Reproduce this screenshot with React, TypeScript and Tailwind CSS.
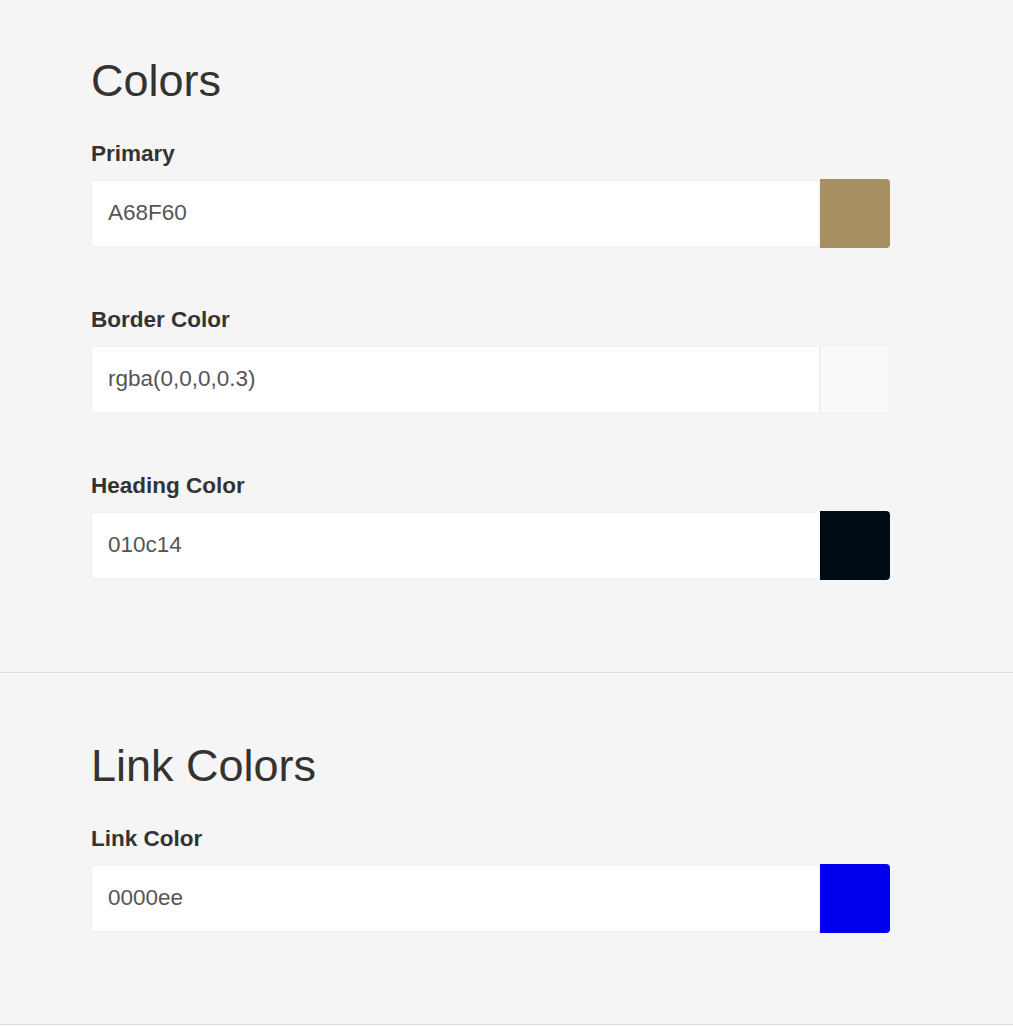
const font = { fontFamily: '"Liberation Sans", Arial, sans-serif' };

type Field = { label: string; value: string; swatch: string };

const colorFields: Field[] = [
  { label: "Primary", value: "A68F60", swatch: "bg-[#a68f60]" },
  { label: "Border Color", value: "rgba(0,0,0,0.3)", swatch: "bg-[#f9f9f9] border border-[#efefef]" },
  { label: "Heading Color", value: "010c14", swatch: "bg-[#010c14]" },
];

const linkFields: Field[] = [{ label: "Link Color", value: "0000ee", swatch: "bg-[#0000ee]" }];

function ColorField({ field, first }: { field: Field; first: boolean }) {
  return (
    <div className={first ? "mt-[39px]" : "mt-[60px]"}>
      <label className="block text-[22.5px] leading-[23px] font-bold text-[#333]">{field.label}</label>
      <div className="mt-[14px] flex w-[799px] h-[69px]">
        <input
          readOnly
          value={field.value}
          style={font}
          className="flex-1 h-[67px] my-px bg-white border border-[#f0f0f0] rounded-l-[3px] px-4 pb-px text-[22.5px] text-[#555] outline-none"
        />
        <div className={`w-[70px] h-[69px] rounded-r-[4px] ${field.swatch}`} />
      </div>
    </div>
  );
}

function Section({ title, fields, top, bottom }: { title: string; fields: Field[]; top: string; bottom: string }) {
  return (
    <section className={`px-[91px] border-b border-[#dedede] shadow-[0_1px_0_#fbfbfb] ${top} ${bottom}`}>
      <h2 className="text-[45px] leading-none font-normal text-[#333]">{title}</h2>
      {fields.map((f, i) => (
        <ColorField key={f.label} field={f} first={i === 0} />
      ))}
    </section>
  );
}

export default function App() {
  return (
    <div className="min-h-screen w-full bg-[#f5f5f5]" style={font}>
      <Section title="Colors" fields={colorFields} top="pt-[58px]" bottom="pb-[92px]" />
      <Section title="Link Colors" fields={linkFields} top="pt-[70px]" bottom="pb-[91px]" />
    </div>
  );
}
